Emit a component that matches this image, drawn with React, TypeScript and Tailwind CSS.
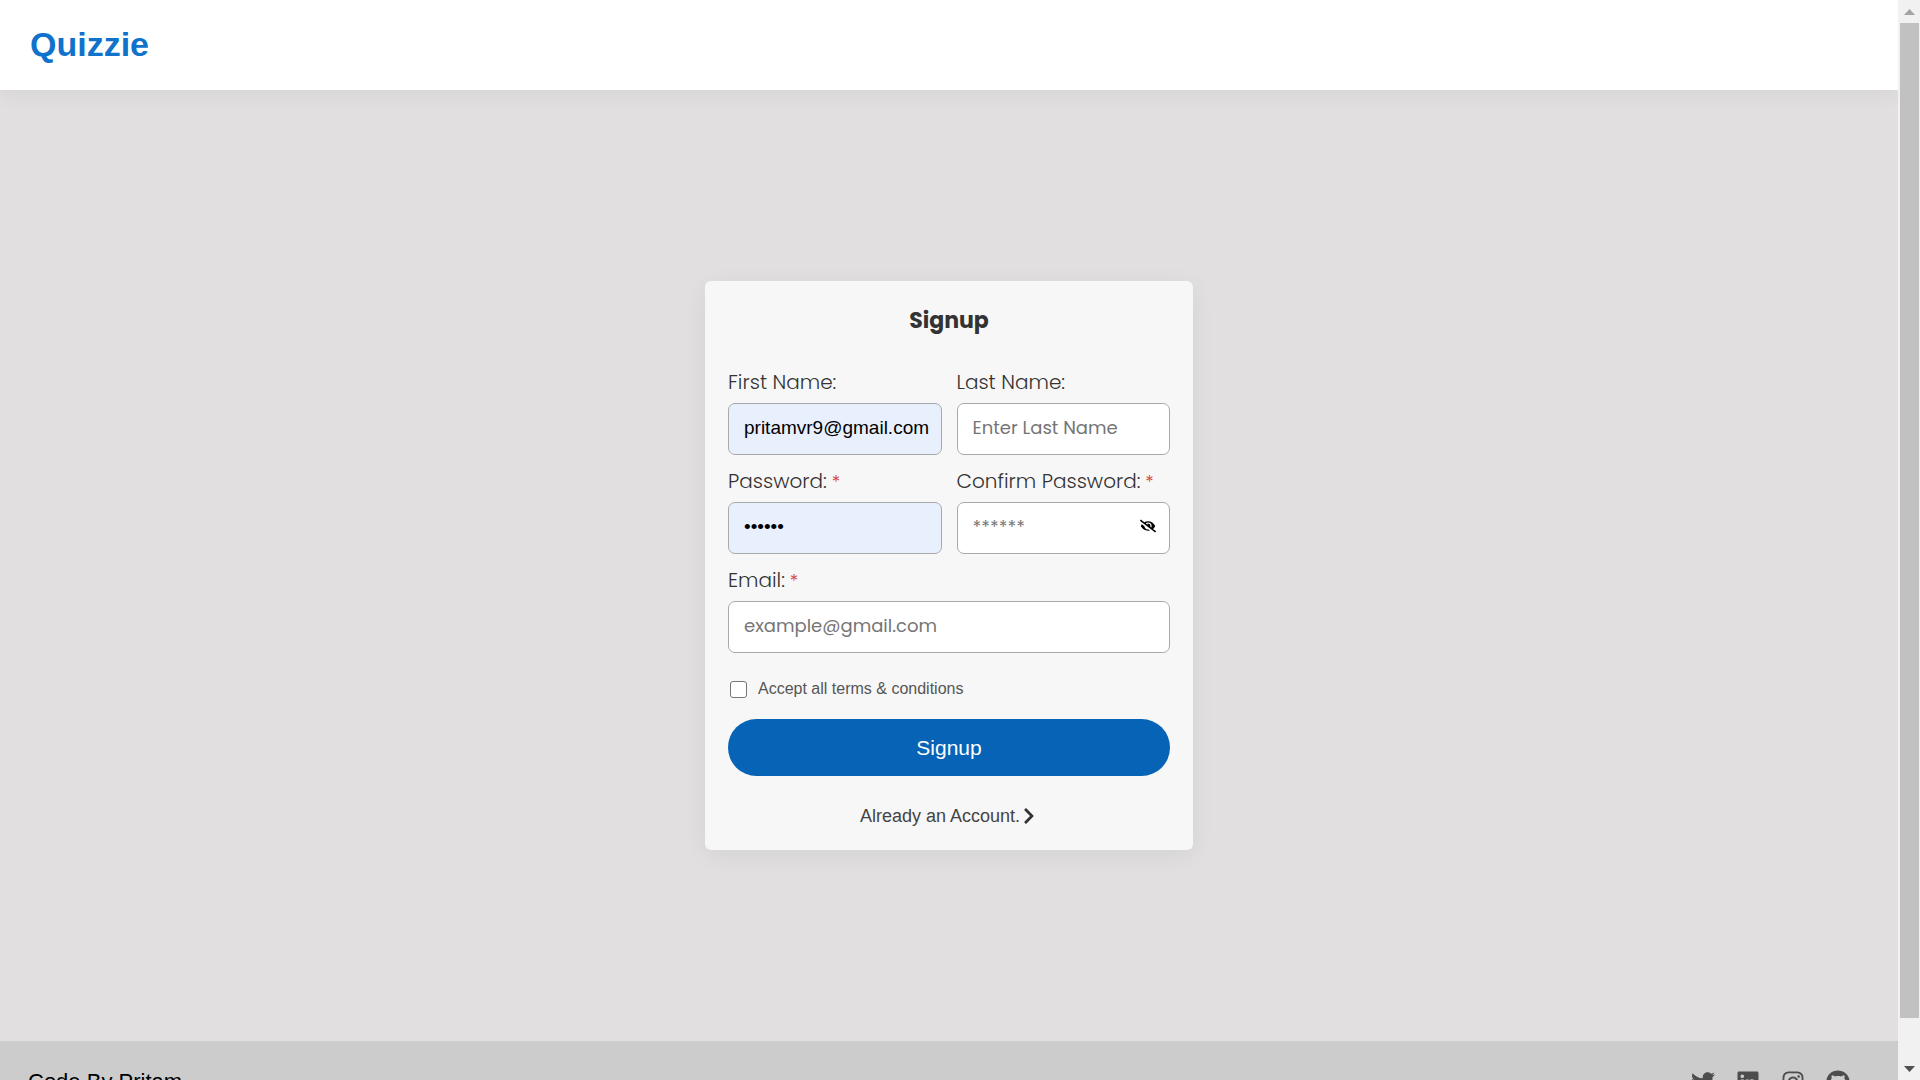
import { useState } from "react";
import type { ReactNode } from "react";
import { FaTwitter, FaLinkedin, FaInstagram, FaGithub, FaChevronRight, FaEyeSlash } from "react-icons/fa";

const inputBase =
  "w-full h-[52px] rounded-[7px] border border-[#a9a9a9] pl-[15px] pr-2 pb-[3px] outline-none placeholder:text-[#757575]";

function Field({
  id,
  label,
  required,
  wide,
  children,
}: {
  id: string;
  label: string;
  required?: boolean;
  wide?: boolean;
  children: ReactNode;
}) {
  return (
    <div className={wide ? "col-span-2 min-w-0" : "min-w-0"}>
      <label htmlFor={id} className="mb-[7px] block whitespace-nowrap text-[20px] leading-[28px] font-light text-[#333]">
        {label}
        {required && <span className="text-[18px] leading-none text-[#d33a2f]"> *</span>}
      </label>
      {children}
    </div>
  );
}

function SignupCard() {
  const [first, setFirst] = useState("pritamvr9@gmail.com");
  const [password, setPassword] = useState("abcdef");
  return (
    <form
      className="w-[488px] rounded-[6px] bg-[#f7f7f7] px-[23px] pt-6 pb-[21px] shadow-[0_5px_25px_rgba(0,0,0,0.06)] font-['Poppins','Inter',sans-serif]"
      onSubmit={(e) => e.preventDefault()}
    >
      <h2 className="text-center text-[22px] leading-[32px] font-bold text-[#333]">Signup</h2>
      <div className="mt-[31px] grid grid-cols-2 gap-x-[15px] gap-y-3">
        <Field id="first" label="First Name:">
          <input
            id="first"
            type="text"
            value={first}
            onChange={(e) => setFirst(e.target.value)}
            className={`${inputBase} bg-[#e8f0fe] text-[19px] text-black font-['Liberation_Sans',Arial,sans-serif]`}
          />
        </Field>
        <Field id="last" label="Last Name:">
          <input id="last" type="text" placeholder="Enter Last Name" className={`${inputBase} bg-white text-[18px]`} />
        </Field>
        <Field id="password" label="Password:" required>
          <input
            id="password"
            type="password"
            value={password}
            onChange={(e) => setPassword(e.target.value)}
            className={`${inputBase} bg-[#e8f0fe] text-[19px] text-black font-['Liberation_Sans',Arial,sans-serif]`}
          />
        </Field>
        <Field id="confirm" label="Confirm Password:" required>
          <div className="relative">
            <input id="confirm" type="password" placeholder="******" className={`${inputBase} bg-white text-[18px]`} />
            <button type="button" aria-label="Show password" className="absolute inset-y-0 right-[14px] flex items-center pb-1 text-black">
              <FaEyeSlash size={16} />
            </button>
          </div>
        </Field>
        <Field id="email" label="Email:" required wide>
          <input id="email" type="email" placeholder="example@gmail.com" className={`${inputBase} bg-white text-[18px]`} />
        </Field>
      </div>
      <div className="font-['Liberation_Sans',Arial,sans-serif]">
        <label className="mt-6 flex items-center gap-[11px] pl-[2px] text-[16px] leading-6 text-[#555]">
          <input
            type="checkbox"
            className="size-[17px] appearance-none rounded-[3px] border border-[#767676] bg-white checked:bg-[#0663b5]"
          />
          Accept all terms &amp; conditions
        </label>
        <button type="submit" className="mt-[18px] h-[57px] w-full rounded-full bg-[#0663b5] text-[21px] text-white">
          Signup
        </button>
        <a href="#login" className="mt-[27px] flex items-center justify-center text-[18px] leading-[26px] text-[#444]">
          Already an Account.
          <FaChevronRight size={18} className="text-[#333]" />
        </a>
      </div>
    </form>
  );
}

const socials = [
  { name: "Twitter", Icon: FaTwitter },
  { name: "LinkedIn", Icon: FaLinkedin },
  { name: "Instagram", Icon: FaInstagram },
  { name: "GitHub", Icon: FaGithub },
];

function ScrollBar() {
  return (
    <div aria-hidden="true" className="flex w-[22px] shrink-0 flex-col items-center bg-[#f1f1f1]">
      <svg width="22" height="23" viewBox="0 0 22 23" className="shrink-0">
        <path d="M6 15L11.500 9L17 15Z" fill="#a3a3a3" />
      </svg>
      <div className="w-[19px] flex-1 bg-[#c1c1c1]" />
      <svg width="22" height="62" viewBox="0 0 22 62" className="shrink-0">
        <path d="M6 48L11.500 54L17 48Z" fill="#505050" />
      </svg>
    </div>
  );
}

export default function App() {
  return (
    <div className="flex h-screen overflow-hidden bg-[#e1dfe0] font-['Liberation_Sans',Arial,sans-serif]">
      <div className="flex min-w-0 flex-1 flex-col overflow-hidden">
        <header className="z-10 flex h-[90px] shrink-0 items-center bg-white px-[30px] pb-[3px] shadow-[0_5px_20px_rgba(0,0,0,0.05)]">
          <h1 className="text-[34px] leading-10 font-bold text-[#0f72cb]">Quizzie</h1>
        </header>
        <main className="flex min-h-[calc(100vh-129px)] shrink-0 items-center justify-center">
          <SignupCard />
        </main>
        <footer className="flex h-[82px] shrink-0 items-center justify-between bg-[#ccc] pr-12 pl-7">
          <p className="text-[22px] leading-8 text-black">Code By Pritam</p>
          <nav className="flex gap-[21px]">
            {socials.map(({ name, Icon }) => (
              <a key={name} href="#social" aria-label={name} className="text-[#4d4d4d]">
                <Icon size={24} />
              </a>
            ))}
          </nav>
        </footer>
      </div>
      <ScrollBar />
    </div>
  );
}
